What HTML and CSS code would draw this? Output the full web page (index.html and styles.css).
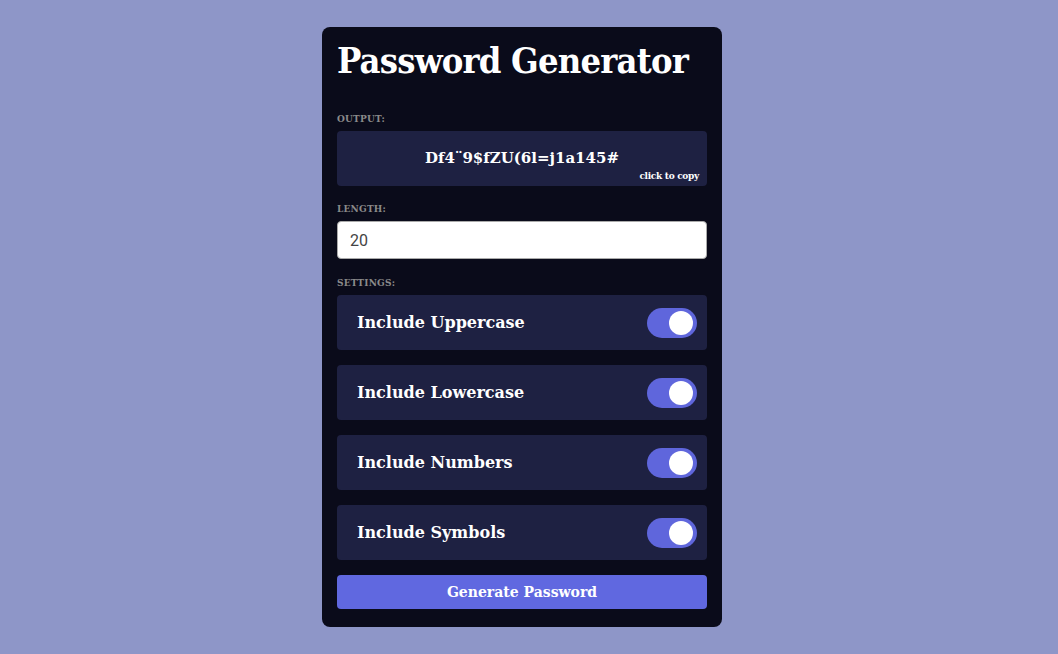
FILE: index.html
```html
<!DOCTYPE html>
<html>
<head>
<meta charset="utf-8">
<link rel="stylesheet" href="styles.css">
</head>
<body>
<div class="page">
  <div class="card">
    <h1 class="title">Password Generator</h1>
    <div class="label label-first">OUTPUT:</div>
    <div class="output">
      <span class="password">Df4¨9$fZU(6l=j1a145#</span>
      <span class="copy">click to copy</span>
    </div>
    <div class="label">LENGTH:</div>
    <div class="input">20</div>
    <div class="label label-settings">SETTINGS:</div>
    <div class="settings">
      <div class="setting"><span class="setting-name">Include Uppercase</span><span class="toggle"><span class="knob"></span></span></div>
      <div class="setting"><span class="setting-name">Include Lowercase</span><span class="toggle"><span class="knob"></span></span></div>
      <div class="setting"><span class="setting-name">Include Numbers</span><span class="toggle"><span class="knob"></span></span></div>
      <div class="setting"><span class="setting-name">Include Symbols</span><span class="toggle"><span class="knob"></span></span></div>
    </div>
    <button class="generate">Generate Password</button>
  </div>
</div>
</body>
</html>
```
FILE: styles.css
```css
* { box-sizing: border-box; }
html, body { margin: 0; padding: 0; }
body {
  background: #8e96c8;
  font-family: "DejaVu Serif", "Liberation Serif", serif;
  color: #fff;
}
.page {
  display: flex;
  justify-content: center;
  padding-top: 27px;
  padding-right: 14px;
  height: 654px;
}
.card {
  width: 400px;
  height: 600px;
  background: #0a0b1a;
  border-radius: 8px;
  padding: 12px 15px 18px;
  display: flex;
  flex-direction: column;
}
.card > * { flex-shrink: 0; }
.title {
  margin: 0;
  font-size: 36px;
  font-weight: 700;
  font-stretch: condensed;
  letter-spacing: -0.8px;
  line-height: 42px;
  white-space: nowrap;
}
.label {
  font-size: 9px;
  font-weight: 700;
  color: #8a8a8a;
  line-height: 13px;
  margin-top: 17px;
  margin-bottom: 5px;
  letter-spacing: 0.2px;
}
.label-first { margin-top: 32px; }
.label-settings { margin-top: 18px; }
.output {
  position: relative;
  height: 55px;
  background: #1e2142;
  border-radius: 4px;
  display: flex;
  align-items: center;
  justify-content: center;
}
.password {
  font-size: 15px;
  font-weight: 700;
  margin-top: -1px;
}
.copy {
  position: absolute;
  right: 8px;
  bottom: 5px;
  font-size: 9px;
  font-weight: 700;
  letter-spacing: -0.3px;
}
.input {
  height: 38px;
  background: #fff;
  border: 1px solid #aaa;
  border-radius: 4px;
  padding: 0 12px;
  display: flex;
  align-items: center;
  font-family: Roboto, "Liberation Sans", sans-serif;
  font-size: 16px;
  color: #444;
}
.settings {
  display: flex;
  flex-direction: column;
  gap: 15px;
}
.setting {
  height: 55px;
  background: #1e2142;
  border-radius: 4px;
  padding: 0 10px 0 20px;
  display: flex;
  align-items: center;
  justify-content: space-between;
}
.setting-name {
  font-size: 16px;
  font-weight: 700;
}
.toggle {
  width: 50px;
  height: 30px;
  border-radius: 15px;
  background: #5f66dc;
  display: flex;
  align-items: center;
  justify-content: flex-end;
  padding-right: 4px;
}
.knob {
  width: 24px;
  height: 24px;
  border-radius: 50%;
  background: #fff;
}
.generate {
  margin-top: 15px;
  height: 34px;
  border: none;
  border-radius: 4px;
  background: #6068e0;
  color: #fff;
  font-family: "DejaVu Serif", "Liberation Serif", serif;
  font-size: 14px;
  font-weight: 700;
  padding: 0;
}
```
